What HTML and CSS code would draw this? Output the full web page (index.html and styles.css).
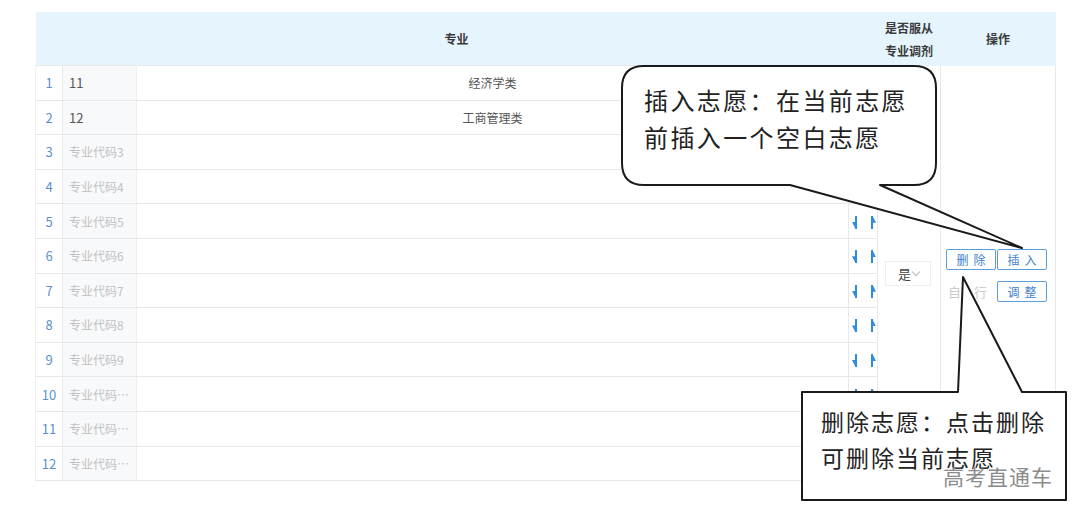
FILE: index.html
```html
<!DOCTYPE html>
<html lang="zh-CN">
<head>
    <meta charset="UTF-8">
    <meta name="viewport" content="width=device-width, initial-scale=1.0">
    <title>志愿填报 - 专业</title>
    <link rel="stylesheet" href="styles.css">
</head>
<body>
    <div class="page">
        <table class="zy-table">
            <colgroup>
                <col class="c-idx">
                <col class="c-code">
                <col class="c-name">
                <col class="c-move">
                <col class="c-adjust">
                <col class="c-op">
            </colgroup>
            <thead>
                <tr>
                    <th colspan="4">专业</th>
                    <th class="th-adjust">是否服从<br>专业调剂</th>
                    <th>操作</th>
                </tr>
            </thead>
            <tbody>
                <tr>
                    <td class="idx">1</td>
                    <td class="code filled"><span>11</span></td>
                    <td class="name">经济学类</td>
                    <td class="move"><i class="mv mv-down"></i><i class="mv mv-up"></i></td>
                    <td class="adjust" rowspan="12">
                        <div class="select">是<span class="caret"></span></div>
                    </td>
                    <td class="op" rowspan="12">
                        <div class="op-row">
                            <button class="btn">删除</button><button class="btn">插入</button>
                        </div>
                        <div class="op-row">
                            <span class="op-off">自行</span><button class="btn">调整</button>
                        </div>
                    </td>
                </tr>
                <tr>
                    <td class="idx">2</td>
                    <td class="code filled"><span>12</span></td>
                    <td class="name">工商管理类</td>
                    <td class="move"><i class="mv mv-down"></i><i class="mv mv-up"></i></td>
                </tr>
                <tr>
                    <td class="idx">3</td>
                    <td class="code"><span>专业代码3</span></td>
                    <td class="name"></td>
                    <td class="move"><i class="mv mv-down"></i><i class="mv mv-up"></i></td>
                </tr>
                <tr>
                    <td class="idx">4</td>
                    <td class="code"><span>专业代码4</span></td>
                    <td class="name"></td>
                    <td class="move"><i class="mv mv-down"></i><i class="mv mv-up"></i></td>
                </tr>
                <tr>
                    <td class="idx">5</td>
                    <td class="code"><span>专业代码5</span></td>
                    <td class="name"></td>
                    <td class="move"><i class="mv mv-down"></i><i class="mv mv-up"></i></td>
                </tr>
                <tr>
                    <td class="idx">6</td>
                    <td class="code"><span>专业代码6</span></td>
                    <td class="name"></td>
                    <td class="move"><i class="mv mv-down"></i><i class="mv mv-up"></i></td>
                </tr>
                <tr>
                    <td class="idx">7</td>
                    <td class="code"><span>专业代码7</span></td>
                    <td class="name"></td>
                    <td class="move"><i class="mv mv-down"></i><i class="mv mv-up"></i></td>
                </tr>
                <tr>
                    <td class="idx">8</td>
                    <td class="code"><span>专业代码8</span></td>
                    <td class="name"></td>
                    <td class="move"><i class="mv mv-down"></i><i class="mv mv-up"></i></td>
                </tr>
                <tr>
                    <td class="idx">9</td>
                    <td class="code"><span>专业代码9</span></td>
                    <td class="name"></td>
                    <td class="move"><i class="mv mv-down"></i><i class="mv mv-up"></i></td>
                </tr>
                <tr>
                    <td class="idx">10</td>
                    <td class="code"><span>专业代码10</span></td>
                    <td class="name"></td>
                    <td class="move"><i class="mv mv-down"></i><i class="mv mv-up"></i></td>
                </tr>
                <tr>
                    <td class="idx">11</td>
                    <td class="code"><span>专业代码11</span></td>
                    <td class="name"></td>
                    <td class="move"><i class="mv mv-down"></i><i class="mv mv-up"></i></td>
                </tr>
                <tr>
                    <td class="idx">12</td>
                    <td class="code"><span>专业代码12</span></td>
                    <td class="name"></td>
                    <td class="move"><i class="mv mv-down"></i><i class="mv mv-up"></i></td>
                </tr>
            </tbody>
        </table>
    </div>

    <!-- bulles d'explication par-dessus le tableau -->
    <svg class="bubbles" width="1080" height="513" viewBox="0 0 1080 513">
        <path d="M644 66 H914 Q936 66 936 88 V163 Q936 185 914 185 H880 L1022 248 L790 185 H644 Q622 185 622 163 V88 Q622 66 644 66 Z"/>
        <path d="M802 392 H958 L963 277 L1022 392 H1066 V500 H802 Z"/>
    </svg>
    <div class="tip tip-insert">插入志愿：在当前志愿<br>前插入一个空白志愿</div>
    <div class="tip tip-delete">删除志愿：点击删除<br>可删除当前志愿</div>
    <div class="watermark">高考直通车</div>
</body>
</html>
```

FILE: styles.css
```css
/* Base */
html, body {
    margin: 0;
    padding: 0;
    background-color: #ffffff;
    font-family: "Noto Sans CJK SC", "Noto Sans", sans-serif;
}

body {
    position: relative;
    width: 1080px;
    height: 513px;
    overflow: hidden;
}

.page {
    padding: 12px 25px 0 35px;
}

/* Tableau des professions */
.zy-table {
    width: 1020px;
    table-layout: fixed;
    border-collapse: collapse;
    font-size: 12px;
    color: #555;
}

.c-idx { width: 27px; }
.c-code { width: 74px; }
.c-name { width: 712px; }
.c-move { width: 29px; }
.c-adjust { width: 63px; }
.c-op { width: 115px; }

.zy-table th {
    height: 53px;
    padding: 0;
    background-color: #e5f4fd;
    color: #3a3a3a;
    font-weight: bold;
    font-size: 12px;
}

.zy-table .th-adjust {
    line-height: 23px;
}

.zy-table tbody tr {
    height: 34.6px;
}

.zy-table td {
    padding: 0;
    border: 1px solid #e8e8e8;
    white-space: nowrap;
}

.zy-table td.idx {
    text-align: center;
    color: #5b8fcf;
    font-size: 13px;
    border-left-color: #f0f0f0;
}

.zy-table td.code {
    background-color: #f7f9fb;
    color: #c2c2c2;
    padding-left: 6px;
    border-right-color: #efefef;
}

.code span {
    display: block;
    max-width: 61px;
    overflow: hidden;
    text-overflow: ellipsis;
}

.zy-table td.code.filled {
    color: #555;
    font-size: 13px;
}

.zy-table td.name {
    text-align: center;
}

.zy-table td.move {
    padding-left: 1px;
    border-right-color: #eeeeee;
}

/* Flèches monter / descendre */
.mv {
    display: inline-block;
    position: relative;
    width: 6px;
    height: 13px;
    vertical-align: -2px;
}

.mv::before,
.mv::after {
    content: "";
    position: absolute;
    background-color: #2d8ce0;
}

.mv-down {
    margin-left: 2px;
}

.mv-down::before {
    left: 3px;
    top: 0;
    width: 2px;
    height: 13px;
}

.mv-down::after {
    left: 0;
    top: 6px;
    width: 3px;
    height: 6px;
    clip-path: polygon(0 0, 100% 0, 100% 100%);
}

.mv-up {
    margin-left: 12px;
}

.mv-up::before {
    left: 1px;
    top: 0;
    width: 2px;
    height: 13px;
}

.mv-up::after {
    left: 3px;
    top: 1px;
    width: 3px;
    height: 6px;
    clip-path: polygon(0 0, 100% 100%, 0 100%);
}

/* Colonne "服从调剂" */
.zy-table td.adjust {
    text-align: center;
    vertical-align: middle;
    border-top: none;
    border-bottom: none;
}

.select {
    display: inline-block;
    width: 44px;
    height: 23px;
    line-height: 23px;
    border: 1px solid #eeeeee;
    font-size: 13px;
    color: #444;
    text-indent: -6px;
    position: relative;
    margin-left: -3px;
}

.caret {
    position: absolute;
    right: 11px;
    top: 7px;
    width: 5px;
    height: 5px;
    border-right: 1px solid #b5b5b5;
    border-bottom: 1px solid #b5b5b5;
    transform: rotate(45deg);
}

/* Colonne "操作" */
.zy-table td.op {
    vertical-align: middle;
    padding-left: 5px;
    padding-top: 4px;
    border-top: none;
    border-bottom: none;
}

.op-row {
    display: flex;
    align-items: center;
    height: 21px;
}

.op-row + .op-row {
    margin-top: 11px;
}

.btn {
    width: 50px;
    height: 21px;
    margin: 0 1px 0 0;
    padding: 0;
    border: 1px solid #5b9ddb;
    border-radius: 2px;
    background-color: #ffffff;
    color: #3e83cc;
    font-family: inherit;
    font-size: 12px;
    letter-spacing: 5px;
    text-indent: 5px;
    line-height: 19px;
}

.op-off {
    box-sizing: border-box;
    width: 51px;
    font-size: 13px;
    color: #cccccc;
    letter-spacing: 13px;
    padding-left: 2px;
}

/* Bulles */
.bubbles {
    position: absolute;
    left: 0;
    top: 0;
    pointer-events: none;
}

.bubbles path {
    fill: #ffffff;
    stroke: #1a1a1a;
    stroke-width: 2;
    stroke-linejoin: round;
}

.tip {
    position: absolute;
    color: #222;
    font-weight: normal;
}

.tip-insert {
    left: 644px;
    top: 81px;
    font-size: 24px;
    line-height: 37px;
    letter-spacing: 2.4px;
}

.tip-delete {
    left: 821px;
    top: 403px;
    font-size: 23px;
    line-height: 36px;
    letter-spacing: 2px;
}

.watermark {
    position: absolute;
    left: 943px;
    top: 464px;
    font-size: 21px;
    line-height: 24px;
    color: #8c8c8c;
    letter-spacing: 1px;
    text-shadow: 0 0 2px #ffffff;
}
```
